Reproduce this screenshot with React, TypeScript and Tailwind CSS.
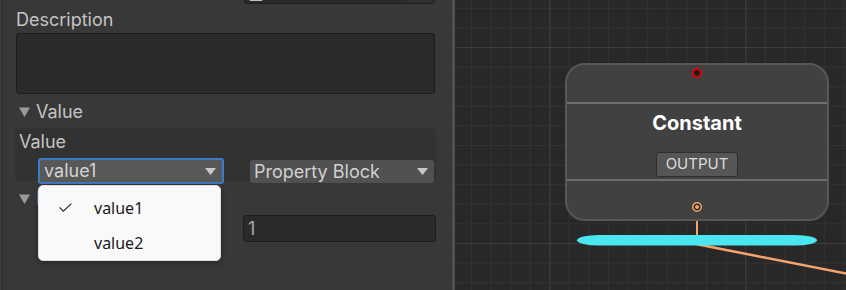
import React from 'react';

const inter = { fontFamily: 'Inter, "Liberation Sans", sans-serif' };

function DownTriangle({ className }: { className?: string }) {
  return (
    <svg width="11" height="10" viewBox="0 0 11 10" className={className}>
      <path d="M0 0.5H11L5.5 10Z" fill="currentColor" />
    </svg>
  );
}

function DropArrow() {
  return (
    <svg width="11" height="7" viewBox="0 0 11 7">
      <path d="M0 0H11L5.5 7Z" fill="#c8c8c8" />
    </svg>
  );
}

function Inspector() {
  return (
    <div className="relative w-[452px] h-full shrink-0 bg-[#383838] border-l-2 border-[#3b3b3b] shadow-[inset_1px_0_0_#2a2a2a] flex flex-col text-[18px] text-[#c4c4c4] font-['Inter']">
      {/* top row, mostly scrolled out of view */}
      <div className="-mt-[23px] h-[27px] flex items-center pl-[15px] pr-[17px]">
        <span className="leading-[20px] -translate-y-[1px]">Type</span>
        <div className="ml-auto w-[191px] h-full flex items-end bg-[#2a2a2a] border border-[#1e1e1e] rounded-[3px] overflow-hidden">
          <div className="ml-[4px] mb-[2px] w-[14px] h-[14px] bg-[#c4c4c4] rounded-[2px]" />
          <div className="ml-auto w-[27px] h-full bg-[#2f2f2f]" />
        </div>
      </div>

      {/* Description */}
      <div className="mt-[6px] h-[20px] leading-[20px] pl-[14px]">Description</div>
      <div className="mt-[3px] ml-[14px] mr-[17px] h-[61px] bg-[#2a2a2a] border border-[#1c1c1c] rounded-[3px]" />

      {/* Value foldout */}
      <div className="mt-[8px] h-[20px] flex items-center pl-[17px] gap-[6px]">
        <DownTriangle className="text-[#9a9a9a]" />
        <span className="leading-[20px]">Value</span>
      </div>
      <div className="mt-[6px] ml-[13px] mr-[16px] h-[53px] bg-[#323232] rounded-[2px] flex flex-col">
        <div className="pt-[4px] pl-[4px] h-[24px] leading-[20px]">Value</div>
        <div className="mt-[6px] flex items-start">
          <div className="ml-[23px] w-[186px] h-[26px] bg-[#585858] border-2 border-[#3b7cc6] rounded-[3px] flex items-center pl-[4px] pr-[6px] text-[#d4d4d4]">
            <span className="leading-[20px]">value1</span>
            <span className="ml-auto"><DropArrow /></span>
          </div>
          <div className="ml-[26px] mt-[2px] w-[184px] h-[23px] bg-[#515151] rounded-[3px] flex items-center pl-[4px] pr-[6px] text-[#d0d0d0]">
            <span className="leading-[20px]">Property Block</span>
            <span className="ml-auto"><DropArrow /></span>
          </div>
        </div>
      </div>

      {/* second foldout */}
      <div className="mt-[8px] h-[20px] flex items-center pl-[17px] gap-[6px]">
        <DownTriangle className="text-[#9a9a9a]" />
        <span className="leading-[20px]">Range</span>
      </div>
      <div className="mt-[6px] h-[27px] flex items-center pr-[16px]">
        <span className="ml-[36px] leading-[20px]">Count</span>
        <div className="ml-auto w-[193px] h-full bg-[#2a2a2a] border border-[#1c1c1c] rounded-[3px] flex items-center pl-[4px] text-[#a8a8a8]">
          1
        </div>
      </div>

      {/* dropdown menu */}
      <div className="absolute left-[36px] top-[185px] w-[183px] h-[76px] bg-[#f9f9f9] border border-[#dedede] rounded-[5px] shadow-[0_2px_6px_rgba(0,0,0,0.35)] pt-[4px] font-['Noto_Sans'] text-[16px] text-[#1a1a1a]">
        <div className="h-[35px] flex items-center">
          <svg width="13" height="9" viewBox="0 0 13 9" className="ml-[20px]">
            <path d="M0.6 4.4L4.3 8.1L12.4 0.6" fill="none" stroke="#2b2b2b" strokeWidth="1.2" />
          </svg>
          <span className="ml-[22px] leading-[20px]">value1</span>
        </div>
        <div className="h-[35px] flex items-center">
          <span className="ml-[55px] leading-[20px]">value2</span>
        </div>
      </div>
    </div>
  );
}

function GraphCanvas() {
  return (
    <div className="relative flex-1 h-full bg-[#282828] border-l-[3px] border-[#505050] overflow-hidden" style={inter}>
      <svg className="absolute inset-0 w-full h-full">
        <defs>
          <pattern id="minor" width="19.6" height="19.6" x="94.3" y="47" patternUnits="userSpaceOnUse">
            <path d="M0 0.5H19.6M0.5 0V19.6" stroke="#323232" strokeWidth="1" />
          </pattern>
          <pattern id="major" width="196" height="196" x="94.3" y="47" patternUnits="userSpaceOnUse">
            <path d="M0 0.5H196M0.5 0V196" stroke="#3d3d3d" strokeWidth="1" />
          </pattern>
        </defs>
        <rect width="100%" height="100%" fill="url(#minor)" />
        <rect width="100%" height="100%" fill="url(#major)" />
      </svg>

      {/* node */}
      <div className="absolute left-[110px] top-[63px] w-[264px] h-[158px] rounded-[20px] border-2 border-[#575757] bg-[#414141] flex flex-col overflow-hidden">
        <div className="h-[37px] flex justify-center pt-[3px]">
          <div className="w-[10px] h-[10px] rounded-full border-2 border-[#e60000] bg-[#1a1a1a]" />
        </div>
        <div className="h-[2px] bg-[#6e6e6e]" />
        <div className="h-[75px] flex flex-col items-center">
          <div className="pt-[7px] leading-[24px] text-[20px] font-bold text-white">Constant</div>
          <div className="mt-[17px] h-[25px] w-[82px] bg-[#565656] border border-[#2e2e2e] rounded-[3px] flex items-center justify-center text-[15px] text-[#dcdcdc]">
            OUTPUT
          </div>
        </div>
        <div className="h-[2px] bg-[#6e6e6e]" />
        <div className="flex-1 flex justify-center pt-[21px]">
          <svg width="10" height="10" viewBox="0 0 10 10">
            <circle cx="5" cy="5" r="4.2" fill="#2a2a2a" stroke="#f4a46a" strokeWidth="1.5" />
            <circle cx="5" cy="5" r="2" fill="#f4a46a" />
          </svg>
        </div>
      </div>

      {/* edges */}
      <svg className="absolute inset-0 w-full h-full pointer-events-none">
        <line x1="242" y1="221" x2="242" y2="240" stroke="#f4a46a" strokeWidth="2" />
        <line x1="242" y1="244.3" x2="400" y2="275.2" stroke="#f4a46a" strokeWidth="2.5" />
        <rect x="122" y="235" width="240" height="10.5" rx="22" ry="5.25" fill="#4ae8ee" />
      </svg>
    </div>
  );
}

export default function App() {
  return (
    <div className="w-[846px] h-[290px] flex overflow-hidden" style={inter}>
      <Inspector />
      <GraphCanvas />
    </div>
  );
}
